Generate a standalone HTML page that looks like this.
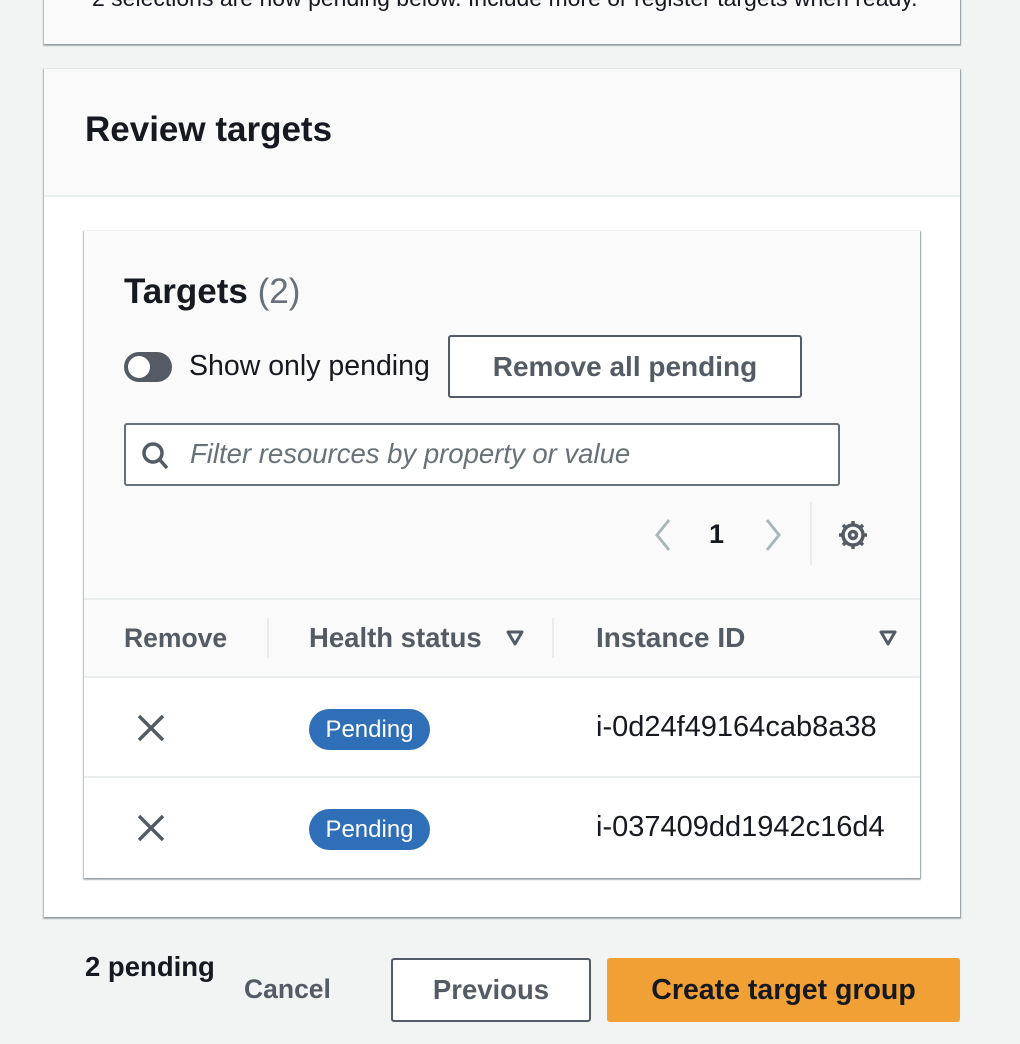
<!DOCTYPE html>
<html><head><meta charset="utf-8"><style>
*{box-sizing:border-box;margin:0;padding:0}
body{width:1020px;height:1044px;background:#f2f3f3;font-family:"Liberation Sans",sans-serif;position:relative;overflow:hidden;color:#16191f}
.a{position:absolute;white-space:nowrap}
.card{position:absolute;background:#fff;box-shadow:0 1px 1px 1px rgba(0,28,36,.3),1px 1px 1px 0 rgba(0,28,36,.15)}
.b{font-weight:bold}
.btn{position:absolute;border:2px solid #545b64;border-radius:3px;background:#fff;color:#545b64;font-weight:bold;font-size:28px;display:flex;align-items:center;justify-content:center}
.badge{position:absolute;background:#2e6fb8;color:#fff;border-radius:21px;font-size:24px;display:flex;align-items:center;justify-content:center;width:121px;height:41px;left:309px}
.vd{position:absolute;width:2px;background:#eaeded}
</style></head><body>
<div class="card" style="left:44px;top:-20px;width:916px;height:64px;background:#fafafa"></div>
<div class="a" style="left:92px;top:-15px;font-size:23px;color:#16191f">2 selections are now pending below. Include more or register targets when ready.</div>

<div class="card" style="left:44px;top:69px;width:916px;height:848px"></div>
<div class="a" style="left:44px;top:69px;width:916px;height:128px;background:#fafafa;border-bottom:2px solid #eaeded"></div>
<div class="a b" style="left:85px;top:110px;font-size:35px">Review targets</div>

<div class="card" style="left:84px;top:231px;width:836px;height:647px;background:#fafafa"></div>
<div class="a" style="left:84px;top:598px;width:836px;height:2px;background:#eaeded"></div>
<div class="a" style="left:84px;top:676px;width:836px;height:202px;background:#fff;border-top:2px solid #eaeded"></div>
<div class="a" style="left:84px;top:776px;width:836px;height:2px;background:#eaeded"></div>

<div class="a" style="left:124px;top:272px;font-size:35px"><b>Targets</b> <span style="color:#687078">(2)</span></div>
<div class="a" style="left:124px;top:352px;width:48px;height:30px;border-radius:15px;background:#545b64"></div>
<div class="a" style="left:128px;top:356px;width:22px;height:22px;border-radius:11px;background:#fff"></div>
<div class="a" style="left:189px;top:350px;font-size:28.5px">Show only pending</div>
<div class="btn" style="left:448px;top:335px;width:354px;height:63px">Remove all pending</div>

<div class="a" style="left:124px;top:423px;width:716px;height:63px;border:2px solid #687078;border-radius:3px;background:#fff"></div>
<svg class="a" style="left:140px;top:440px" width="32" height="32" viewBox="0 0 32 32"><circle cx="13" cy="13" r="9" fill="none" stroke="#545b64" stroke-width="3.5"/><line x1="19.5" y1="19.5" x2="27" y2="28" stroke="#545b64" stroke-width="3.5"/></svg>
<div class="a" style="left:190px;top:438px;font-size:27.5px;font-style:italic;color:#687078">Filter resources by property or value</div>

<svg class="a" style="left:652px;top:518px" width="22" height="34" viewBox="0 0 22 34"><polyline points="17,2 5,17 17,32" fill="none" stroke="#aab7b8" stroke-width="3"/></svg>
<div class="a b" style="left:709px;top:519px;font-size:27px">1</div>
<svg class="a" style="left:762px;top:518px" width="22" height="34" viewBox="0 0 22 34"><polyline points="5,2 17,17 5,32" fill="none" stroke="#aab7b8" stroke-width="3"/></svg>
<div class="vd" style="left:810px;top:502px;height:63px"></div>
<svg class="a" style="left:836px;top:518px" width="34" height="34" viewBox="0 0 34 34"><g stroke="#545b64" stroke-width="3.5" fill="none"><circle cx="17" cy="17" r="10"/><circle cx="17" cy="17" r="3.5"/><path d="M17 3v5M17 26v5M3 17h5M26 17h5M7 7l3.5 3.5M23.5 23.5L27 27M7 27l3.5-3.5M23.5 10.5L27 7"/></g></svg>

<div class="a b" style="left:124px;top:623px;font-size:26.5px;color:#545b64">Remove</div>
<div class="vd" style="left:267px;top:618px;height:40px"></div>
<div class="a b" style="left:309px;top:622px;font-size:27.5px;color:#545b64">Health status</div>
<svg class="a" style="left:505px;top:628px" width="20" height="20" viewBox="0 0 20 20"><polygon points="3,4 17,4 10,16" fill="none" stroke="#545b64" stroke-width="3" stroke-linejoin="round"/></svg>
<div class="vd" style="left:552px;top:618px;height:40px"></div>
<div class="a b" style="left:596px;top:622px;font-size:28px;color:#545b64">Instance ID</div>
<svg class="a" style="left:878px;top:628px" width="20" height="20" viewBox="0 0 20 20"><polygon points="3,4 17,4 10,16" fill="none" stroke="#545b64" stroke-width="3" stroke-linejoin="round"/></svg>

<svg class="a" style="left:137px;top:714px" width="28" height="28" viewBox="0 0 28 28"><path d="M2 2L26 26M26 2L2 26" stroke="#545b64" stroke-width="3.5"/></svg>
<div class="badge" style="top:709px">Pending</div>
<div class="a" style="left:596px;top:711px;font-size:29px">i-0d24f49164cab8a38</div>

<svg class="a" style="left:137px;top:814px" width="28" height="28" viewBox="0 0 28 28"><path d="M2 2L26 26M26 2L2 26" stroke="#545b64" stroke-width="3.5"/></svg>
<div class="badge" style="top:809px">Pending</div>
<div class="a" style="left:596px;top:811px;font-size:29px">i-037409dd1942c16d4</div>

<div class="a b" style="left:85px;top:951px;font-size:27.5px">2 pending</div>
<div class="a b" style="left:244px;top:974px;font-size:26.5px;color:#545b64">Cancel</div>
<div class="btn" style="left:391px;top:958px;width:200px;height:64px;font-size:27.5px">Previous</div>
<div class="btn" style="left:607px;top:958px;width:353px;height:64px;background:#f0a035;border-color:#f0a035;color:#16191f;font-size:28.5px">Create target group</div>
</body></html>
